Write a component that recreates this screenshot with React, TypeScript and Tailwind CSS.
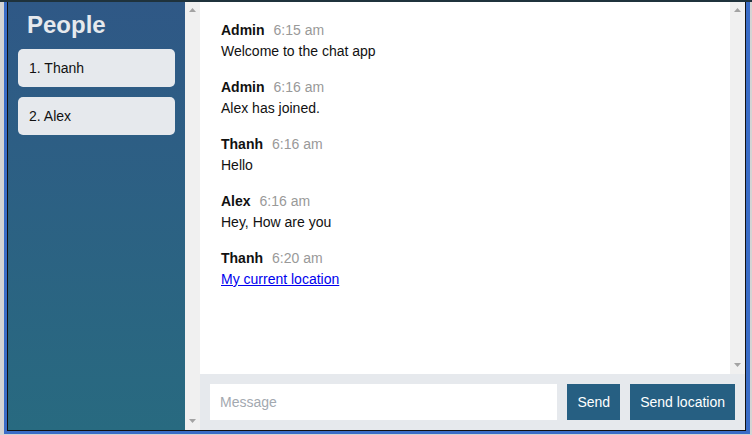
import React from 'react';

const messages = [
  { from: 'Admin', at: '6:15 am', text: 'Welcome to the chat app' },
  { from: 'Admin', at: '6:16 am', text: 'Alex has joined.' },
  { from: 'Thanh', at: '6:16 am', text: 'Hello' },
  { from: 'Alex', at: '6:16 am', text: 'Hey, How are you' },
  { from: 'Thanh', at: '6:20 am', text: 'My current location', link: true },
];

const people = ['Thanh', 'Alex'];

const Arrow: React.FC<{ down?: boolean }> = ({ down }) => (
  <svg width="7" height="4" viewBox="0 0 7 4" className="block">
    <polygon points={down ? '0,0 7,0 3.5,4' : '0,4 7,4 3.5,0'} fill="#a3a3a3" />
  </svg>
);

const Scrollbar: React.FC = () => (
  <div className="w-[15px] shrink-0 bg-[#f0f0f0] flex flex-col justify-between items-center pt-[6px] pb-[7px]">
    <Arrow />
    <Arrow down />
  </div>
);

const App: React.FC = () => {
  return (
    <div className="w-[752px] h-[435px] bg-[#d4d4d4] flex flex-col font-['Liberation_Sans',Arial,sans-serif]">
      <div className="h-[2px] shrink-0 bg-[#1f323c]" />
      <div className="flex-1 flex pl-[4px] pr-[2px] pb-[1px] min-h-0">
        <div className="flex-1 flex bg-[#3a6cc6] pl-[3px] pr-[4px] pb-[3px] min-h-0">
          <div className="flex-1 flex border-x border-b border-[#111] min-h-0">
            <aside className="w-[177px] shrink-0 bg-linear-to-b from-[#2f5886] to-[#286a80] pt-[7px] px-[10px]">
              <h3 className="text-2xl leading-8 font-bold text-[#e6e9ed] pl-[9px]">People</h3>
              <ol className="mt-[8px] flex flex-col gap-[10px]">
                {people.map((p, i) => (
                  <li key={p} className="rounded-[5px] bg-[#e6e9ed] py-[9px] px-[11px] text-[14px] leading-5 text-[#111]">
                    {i + 1}. {p}
                  </li>
                ))}
              </ol>
            </aside>
            <Scrollbar />
            <main className="flex-1 flex flex-col min-w-0">
              <div className="flex-1 flex min-h-0">
                <ol className="flex-1 bg-white pt-[18px] pl-[21px] text-[14px] leading-5 text-[#111]">
                  {messages.map((m, i) => (
                    <li key={i} className="mb-[16px]">
                      <div>
                        <span className="font-bold">{m.from}</span>
                        <span className="ml-[9px] text-[#999]">{m.at}</span>
                      </div>
                      <div className="mt-[1px]">
                        {m.link ? (
                          <a href="#" className="text-[#0000ee] underline">{m.text}</a>
                        ) : (
                          <p>{m.text}</p>
                        )}
                      </div>
                    </li>
                  ))}
                </ol>
                <Scrollbar />
              </div>
              <form className="h-[56px] shrink-0 bg-[#e6e9ed] p-[10px] flex gap-[10px]" onSubmit={(e) => e.preventDefault()}>
                <input
                  placeholder="Message"
                  className="flex-1 min-w-0 h-[36px] bg-white px-[10px] text-[14px] text-[#111] placeholder:text-[#a3a9b0] outline-none"
                />
                <button className="h-[36px] bg-[#265f82] text-white px-[10px] text-[14px]">Send</button>
                <button type="button" className="h-[36px] bg-[#265f82] text-white px-[10px] text-[14px]">Send location</button>
              </form>
            </main>
          </div>
        </div>
      </div>
    </div>
  );
};

export default App;
